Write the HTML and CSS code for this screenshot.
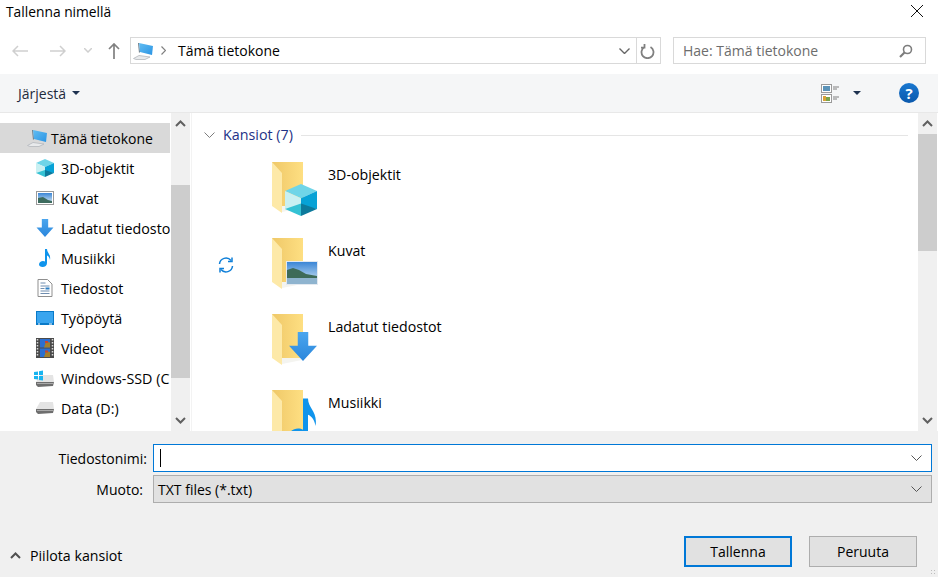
FILE: index.html
```html
<!DOCTYPE html>
<html lang="fi">
<head>
    <meta charset="utf-8">
    <title>Tallenna nimellä</title>
    <link rel="stylesheet" href="styles.css">
</head>
<body>
    <svg class="sprites" width="0" height="0">
        <defs>
            <linearGradient id="folder-back" x1="0" y1="0" x2="1" y2="0">
                <stop offset="0" stop-color="#efc868"/>
                <stop offset="1" stop-color="#fedf82"/>
            </linearGradient>
            <linearGradient id="sky" x1="0" y1="0" x2="0" y2="1">
                <stop offset="0" stop-color="#3b86d6"/>
                <stop offset="1" stop-color="#dcecf5"/>
            </linearGradient>
            <linearGradient id="arrow-blue" x1="0" y1="0" x2="0" y2="1">
                <stop offset="0" stop-color="#4ba6ee"/>
                <stop offset="1" stop-color="#2a86dc"/>
            </linearGradient>
            <linearGradient id="screen" x1="0" y1="0" x2="1" y2="1">
                <stop offset="0" stop-color="#62bdf2"/>
                <stop offset="1" stop-color="#2a94e4"/>
            </linearGradient>
            <symbol id="computer" viewBox="0 0 21 18">
                <polygon points="0.500,16.500 6,13.500 17,15 12,17.500 3,17.500" fill="#e8eaec" stroke="#b4b8bc" stroke-width="0.800"/>
                <polygon points="5,1 6,1 7,10 6,11" fill="#6f7e8a"/>
                <polygon points="6,1 20,4 19,13 7,10" fill="url(#screen)"/>
            </symbol>
            <symbol id="picture" viewBox="0 0 18 14">
                <rect x="0.5" y="0.5" width="17" height="13" fill="#fff" stroke="#9a9a9a"/>
                <rect x="2" y="2" width="14" height="10" fill="url(#sky)"/>
                <polygon points="2,7 7,6 12,9 16,10 16,12 2,12" fill="#3d6b5e"/>
            </symbol>
            <symbol id="photo" viewBox="0 0 32 24">
                <rect width="32" height="24" fill="#e3e9f0"/>
                <rect x="1" y="1" width="30" height="22" fill="url(#sky)"/>
                <polygon points="1,9 7,7 13,9 20,13 31,15 31,17 1,17" fill="#3e6b58"/>
                <rect x="1" y="17" width="30" height="6" fill="#8fb4cf"/>
            </symbol>
            <symbol id="arrow-down" viewBox="0 0 16 17">
                <polygon points="5,0 11,0 11,8 16,8 8,17 0,8 5,8" fill="url(#arrow-blue)"/>
            </symbol>
            <symbol id="note" viewBox="0 0 12 18">
                <path d="M6 0h2c0 4 4 5 3 11-.4-2.500-1.600-4-3-4.500V14c0 2.500-2 4-4.500 4C1.500 18 0 17 0 15.500 0 13.500 2 12 4 12c.8 0 1.500.2 2 .5z" fill="#0f94ec"/>
            </symbol>
            <symbol id="document" viewBox="0 0 15 18">
                <polygon points="0.500,0.500 10,0.500 14.500,5 14.500,17.500 0.500,17.500" fill="#fff" stroke="#8f8f8f"/>
                <path d="M3 4h5M3 7h9M3 9.500h4M3 12h9M3 14.500h9" stroke="#6f8db0" stroke-width="1"/>
                <rect x="8" y="8.500" width="4" height="2" fill="#2d7fc4"/>
            </symbol>
            <symbol id="desktop" viewBox="0 0 18 14">
                <rect width="18" height="14" fill="#0a7ac8"/>
                <rect x="1" y="1" width="16" height="11" fill="#39a5ef"/>
                <rect x="2" y="12.500" width="2" height="1" fill="#fff"/>
                <rect x="13" y="12.500" width="3" height="1" fill="#fff"/>
            </symbol>
            <symbol id="film" viewBox="0 0 18 20">
                <rect width="18" height="20" fill="#4a4a4a"/>
                <path d="M1.500 1v18M16.500 1v18" stroke="#d8d8d8" stroke-width="1.500" stroke-dasharray="1.500 1.500"/>
                <rect x="4" y="1" width="10" height="8.500" fill="#2b6fd0"/>
                <rect x="4" y="10.500" width="10" height="8.500" fill="#2b6fd0"/>
                <path d="M8 9.500l2-6 4 1v5zM8 19l2-6 4 1v5z" fill="#a3802c"/>
                <rect x="9" y="3" width="3" height="2" fill="#c9432e"/>
                <rect x="9" y="12.500" width="3" height="2" fill="#c9432e"/>
            </symbol>
            <symbol id="drive" viewBox="0 0 18 12">
                <polygon points="4,0 17,0 18,7 0,7" fill="#e4e4e4"/>
                <polygon points="0,7 18,7 17,11 2,12 0,10" fill="#6e6e6e"/>
                <rect x="1" y="8" width="16" height="1" fill="#aaa"/>
            </symbol>
            <symbol id="drive-win" viewBox="0 0 20 17">
                <use href="#drive" x="2" y="5" width="18" height="12"/>
                <path d="M0 2l4-.6V5H0zM5 1.200L9 .5V5H5zM0 6h4v3.500L0 9zM5 6h4v4.500L5 10z" fill="#18b4f0"/>
            </symbol>
            <symbol id="cube" viewBox="0 0 18 18">
                <polygon points="9,0 18,4 9,8 0,4" fill="#6fd5e8"/>
                <polygon points="0,4 9,8 9,13 0,14" fill="#c9f0f2"/>
                <polygon points="18,4 9,8 9,13 18,14" fill="#07a2d6"/>
                <polygon points="0,14 9,11 9,18" fill="#35c2d4"/>
                <polygon points="18,14 9,11 9,18" fill="#0d7a9c"/>
            </symbol>
            <symbol id="folder" viewBox="0 0 46 54">
                <polygon points="0,0 31,0 31,44 10,44 10,50 0,43" fill="url(#folder-back)"/>
                <polygon points="0,0 10,11 10,51 0,44" fill="#fde9a8"/>
                <polygon points="10,44 30,44 30,46 10,50" fill="#f4f4f0"/>
            </symbol>
        </defs>
    </svg>

    <div class="dialog">
        <div class="titlebar">
            <span class="title">Tallenna nimellä</span>
            <svg class="close-icon" width="12" height="12" viewBox="0 0 12 12"><path d="M0 0l12 12M12 0L0 12" stroke="#111" fill="none"/></svg>
        </div>

        <div class="navbar">
            <svg class="nav-back" width="16" height="12" viewBox="0 0 16 12"><path d="M16 6H1M6 1L1 6l5 5" stroke="#cfcfcf" stroke-width="1.500" fill="none"/></svg>
            <svg class="nav-forward" width="16" height="12" viewBox="0 0 16 12"><path d="M0 6h15M10 1l5 5-5 5" stroke="#cfcfcf" stroke-width="1.500" fill="none"/></svg>
            <svg class="nav-recent" width="8" height="5" viewBox="0 0 8 5"><path d="M0 0l4 4 4-4" stroke="#cfcfcf" stroke-width="1.500" fill="none"/></svg>
            <svg class="nav-up" width="12" height="16" viewBox="0 0 12 16"><path d="M6 16V1M1 6l5-5 5 5" stroke="#808080" stroke-width="1.700" fill="none"/></svg>
            <div class="address">
                <svg class="address-icon" width="21" height="18"><use href="#computer"/></svg>
                <svg class="address-sep" width="5" height="9" viewBox="0 0 5 9"><path d="M.5.500l4 4-4 4" stroke="#808080" stroke-width="1.200" fill="none"/></svg>
                <span class="address-text">Tämä tietokone</span>
                <svg class="address-drop" width="11" height="6" viewBox="0 0 11 6"><path d="M.5.500l5 5 5-5" stroke="#666" stroke-width="1.400" fill="none"/></svg>
                <div class="address-refresh">
                    <svg width="15" height="16" viewBox="0 0 15 16"><path d="M4.500 4a6 6 0 1 0 6 0M4.500 1v3.700H1" stroke="#808080" stroke-width="1.800" fill="none"/></svg>
                </div>
            </div>
            <div class="search">
                <span class="search-text">Hae: Tämä tietokone</span>
                <svg width="14" height="14" viewBox="0 0 14 14"><circle cx="8.500" cy="5.500" r="4" stroke="#7d7d7d" stroke-width="1.600" fill="none"/><path d="M5.500 8.500L1 13" stroke="#7d7d7d" stroke-width="2.200"/></svg>
            </div>
        </div>

        <div class="toolbar">
            <span class="organize">Järjestä</span>
            <span class="caret"></span>
            <svg class="view-icon" width="19" height="19" viewBox="0 0 19 19">
                <rect x=".5" y=".5" width="10" height="8" fill="#fff" stroke="#9a9a9a"/>
                <rect x="2" y="2" width="7" height="5" fill="#5b93b8"/>
                <rect x=".5" y="10.500" width="10" height="8" fill="#fff" stroke="#9a9a9a"/>
                <rect x="2" y="12" width="3" height="5" fill="#d8a23a"/>
                <rect x="5" y="13" width="4" height="4" fill="#7ba34a"/>
                <path d="M12 3h6M12 5h4M12 13h6M12 15h4" stroke="#808080"/>
            </svg>
            <span class="caret view-caret"></span>
            <span class="help">?</span>
        </div>

        <div class="browser">
            <div class="sidebar">
                <ul class="tree">
                    <li class="tree-root"><svg width="21" height="18"><use href="#computer"/></svg><span>Tämä tietokone</span></li>
                    <li><svg width="18" height="18"><use href="#cube"/></svg><span>3D-objektit</span></li>
                    <li><svg width="18" height="14"><use href="#picture"/></svg><span>Kuvat</span></li>
                    <li><svg width="18" height="18"><use href="#arrow-down"/></svg><span>Ladatut tiedostot</span></li>
                    <li><svg width="18" height="18"><use href="#note"/></svg><span>Musiikki</span></li>
                    <li><svg width="18" height="18"><use href="#document"/></svg><span>Tiedostot</span></li>
                    <li><svg width="18" height="14"><use href="#desktop"/></svg><span>Työpöytä</span></li>
                    <li><svg width="18" height="20"><use href="#film"/></svg><span>Videot</span></li>
                    <li><svg width="20" height="17" class="icon-wide"><use href="#drive-win"/></svg><span>Windows-SSD (C:)</span></li>
                    <li><svg width="18" height="12"><use href="#drive"/></svg><span>Data (D:)</span></li>
                </ul>
                <div class="scrollbar scrollbar-side">
                    <svg class="scroll-arrow" width="11" height="7" viewBox="0 0 11 7"><path d="M1 6l4.500-4.500L10 6" stroke="#606060" stroke-width="2" fill="none"/></svg>
                    <div class="thumb"></div>
                    <svg class="scroll-arrow arrow-end" width="11" height="7" viewBox="0 0 11 7"><path d="M1 1l4.500 4.500L10 1" stroke="#606060" stroke-width="2" fill="none"/></svg>
                </div>
            </div>

            <div class="files">
                <div class="group-head">
                    <svg width="11" height="6" viewBox="0 0 11 6"><path d="M.5.500l5 5 5-5" stroke="#7d7d7d" fill="none"/></svg>
                    <span class="group-name">Kansiot (7)</span>
                    <span class="group-line"></span>
                </div>

                <div class="folder-item">
                    <span class="status"></span>
                    <div class="folder-icon">
                        <svg class="folder-base" width="46" height="54"><use href="#folder"/></svg>
                        <svg class="overlay overlay-cube" width="32" height="32"><use href="#cube"/></svg>
                    </div>
                    <span class="folder-name">3D-objektit</span>
                </div>
                <div class="folder-item">
                    <span class="status">
                        <svg width="16" height="16" viewBox="0 0 16 16"><path d="M1.500 7A6.500 6.500 0 0 1 13 3.500M14.500 9A6.500 6.500 0 0 1 3 12.500" stroke="#0f7fd8" stroke-width="1.500" fill="none"/><path d="M14 .500v4h-4M2 15.500v-4h4" stroke="#0f7fd8" stroke-width="1.500" fill="none"/></svg>
                    </span>
                    <div class="folder-icon">
                        <svg class="folder-base" width="46" height="54"><use href="#folder"/></svg>
                        <svg class="overlay overlay-picture" width="32" height="24"><use href="#photo"/></svg>
                    </div>
                    <span class="folder-name">Kuvat</span>
                </div>
                <div class="folder-item">
                    <span class="status"></span>
                    <div class="folder-icon">
                        <svg class="folder-base" width="46" height="54"><use href="#folder"/></svg>
                        <svg class="overlay overlay-arrow" width="28" height="29" viewBox="0 0 16 17" preserveAspectRatio="none"><use href="#arrow-down"/></svg>
                    </div>
                    <span class="folder-name">Ladatut tiedostot</span>
                </div>
                <div class="folder-item">
                    <span class="status"></span>
                    <div class="folder-icon">
                        <svg class="folder-base" width="46" height="54"><use href="#folder"/></svg>
                        <svg class="overlay overlay-note" width="30" height="46"><use href="#note"/></svg>
                    </div>
                    <span class="folder-name">Musiikki</span>
                </div>

                <div class="scrollbar scrollbar-main">
                    <svg class="scroll-arrow" width="11" height="7" viewBox="0 0 11 7"><path d="M1 6l4.500-4.500L10 6" stroke="#606060" stroke-width="2" fill="none"/></svg>
                    <div class="thumb"></div>
                    <svg class="scroll-arrow arrow-end" width="11" height="7" viewBox="0 0 11 7"><path d="M1 1l4.500 4.500L10 1" stroke="#606060" stroke-width="2" fill="none"/></svg>
                </div>
            </div>
        </div>

        <div class="footer">
            <div class="field">
                <label class="field-label">Tiedostonimi:</label>
                <div class="field-box box-input">
                    <span class="text-cursor"></span>
                    <svg class="field-drop" width="11" height="6" viewBox="0 0 11 6"><path d="M.5.500l5 5 5-5" stroke="#555" fill="none"/></svg>
                </div>
            </div>
            <div class="field field-type">
                <label class="field-label label-type">Muoto:</label>
                <div class="field-box box-select">
                    <span>TXT files (*.txt)</span>
                    <svg class="field-drop" width="11" height="6" viewBox="0 0 11 6"><path d="M.5.500l5 5 5-5" stroke="#555" fill="none"/></svg>
                </div>
            </div>
            <div class="actions">
                <div class="hide-folders">
                    <svg width="11" height="7" viewBox="0 0 11 7"><path d="M1 6l4.500-4.500L10 6" stroke="#505050" stroke-width="2" fill="none"/></svg>
                    <span>Piilota kansiot</span>
                </div>
                <button class="btn btn-primary">Tallenna</button>
                <button class="btn">Peruuta</button>
            </div>
            <span class="grip"></span>
        </div>
    </div>
</body>
</html>
```

FILE: styles.css
```css
* {
    box-sizing: border-box;
}

html,
body {
    margin: 0;
    height: 100%;
}

body {
    font-family: "Open Sans", "Noto Sans", Arial, sans-serif;
    font-size: 14px;
    color: #000;
    background-color: #f0f0f0;
    overflow: hidden;
}

.sprites {
    position: absolute;
}

.dialog {
    display: flex;
    flex-direction: column;
    width: 938px;
    height: 577px;
}

/* Title bar */
.titlebar {
    display: flex;
    align-items: center;
    justify-content: space-between;
    height: 24px;
    padding: 0 15px 2px 6px;
    background-color: #fff;
    font-size: 13.8px;
}

/* Address row */
.navbar {
    display: flex;
    align-items: center;
    height: 50px;
    padding: 13px 12px 10px 12px;
    background-color: #fff;
}

.nav-forward {
    margin-left: 22px;
}

.nav-recent {
    margin-left: 18px;
}

.nav-up {
    margin-left: 16px;
}

.address {
    display: flex;
    align-items: center;
    width: 531px;
    height: 27px;
    margin-left: 10px;
    padding-left: 2px;
    border: 1px solid #d9d9d9;
}

.address-sep {
    margin-left: 7px;
}

.address-text {
    margin-left: 12px;
}

.address-drop {
    margin-left: auto;
    margin-right: 6px;
}

.address-refresh {
    display: flex;
    align-items: center;
    justify-content: center;
    width: 24px;
    height: 100%;
    padding-right: 2px;
    border-left: 1px solid #d9d9d9;
}

.search {
    display: flex;
    align-items: center;
    justify-content: space-between;
    width: 253px;
    height: 27px;
    margin-left: 12px;
    padding: 0 12px 0 9px;
    border: 1px solid #d9d9d9;
    color: #6d6d6d;
}

/* Toolbar */
.toolbar {
    display: flex;
    align-items: center;
    height: 39px;
    padding: 0 19px 0 18px;
    background-color: #f5f6f7;
    border-bottom: 1px solid #e8e8e8;
    color: #1e2a3c;
}

.caret {
    width: 0;
    height: 0;
    margin-left: 6px;
    border-left: 4px solid transparent;
    border-right: 4px solid transparent;
    border-top: 4px solid #1e3250;
}

.view-icon {
    margin-left: auto;
}

.view-caret {
    margin-left: 13px;
}

.help {
    width: 20px;
    height: 20px;
    margin-left: 38px;
    border-radius: 50%;
    background-image: linear-gradient(#1a78d0, #0a58ac);
    color: #fff;
    font-size: 15px;
    font-weight: 700;
    line-height: 20px;
    text-align: center;
}

/* Folder tree and file list */
.browser {
    display: flex;
    height: 318px;
    background-color: #fff;
}

.sidebar {
    display: flex;
    flex: none;
    width: 192px;
    border-right: 1px solid #f3f3f3;
}

.tree {
    flex: none;
    width: 170px;
    margin: 0 1px 0 0;
    padding: 10px 0 0 0;
    list-style: none;
    font-size: 14.3px;
    overflow: hidden;
}

.tree li {
    display: flex;
    align-items: center;
    height: 30px;
    padding-left: 36px;
    white-space: nowrap;
}

.tree li svg {
    flex: none;
    margin-right: 7px;
}

.tree li .icon-wide {
    margin-left: -2px;
}

.tree .tree-root {
    padding-left: 27px;
    background-color: #d9d9d9;
    font-size: 14px;
}

.tree .tree-root svg {
    margin-right: 3px;
}

.scrollbar {
    display: flex;
    flex: none;
    flex-direction: column;
    align-items: center;
    width: 19px;
    background-color: #f0f0f0;
}

.scroll-arrow {
    flex: none;
    margin-top: 7px;
    margin-bottom: 7px;
}

.thumb {
    flex: none;
    width: 100%;
    background-color: #cdcdcd;
}

.scrollbar-side .thumb {
    height: 193px;
    margin-top: 51px;
}

.scrollbar-main .thumb {
    height: 117px;
}

.arrow-end {
    margin-top: auto;
}

.files {
    position: relative;
    flex: 1;
    overflow: hidden;
}

.scrollbar-main {
    position: absolute;
    top: 0;
    right: 1px;
    bottom: 0;
}

.group-head {
    display: flex;
    align-items: center;
    height: 44px;
    padding: 0 30px 0 12px;
}

.group-head svg {
    margin-right: 8px;
}

.group-name {
    padding-bottom: 1px;
    color: #1e3287;
    font-size: 14.3px;
}

.group-line {
    flex: 1;
    height: 1px;
    margin-left: 8px;
    background-color: #e5e5e5;
}

.folder-item {
    display: flex;
    align-items: flex-start;
    height: 76px;
    padding: 5px 0 0 26px;
}

.status {
    display: flex;
    flex: none;
    align-items: center;
    width: 16px;
    height: 54px;
}

.folder-icon {
    position: relative;
    flex: none;
    width: 46px;
    height: 54px;
    margin-left: 38px;
}

.folder-base {
    display: block;
}

.overlay {
    position: absolute;
}

.overlay-cube {
    left: 13px;
    top: 22px;
}

.overlay-picture {
    left: 14px;
    top: 23px;
}

.overlay-arrow {
    left: 17px;
    top: 18px;
}

.overlay-note {
    left: 16px;
    top: 8px;
}

.folder-name {
    margin-top: 3px;
    margin-left: 10px;
    font-size: 14.2px;
}

/* Bottom form */
.footer {
    position: relative;
    flex: 1;
    padding: 13px 6px 0 0;
}

.field {
    display: flex;
    align-items: center;
    height: 28px;
}

.field-type {
    margin-top: 3px;
}

.field-label {
    width: 147px;
    text-align: right;
}

.label-type {
    padding-right: 4px;
}

.field-box {
    display: flex;
    align-items: center;
    justify-content: space-between;
    width: 779px;
    height: 28px;
    margin-left: 6px;
    padding: 0 9px 0 4px;
}

.box-input {
    background-color: #fff;
    border: 1px solid #0078d7;
}

.box-select {
    background-color: #e1e1e1;
    border: 1px solid #adadad;
}

.text-cursor {
    width: 1px;
    height: 18px;
    margin-left: 2px;
    background-color: #000;
}

.actions {
    display: flex;
    align-items: center;
    margin-top: 33px;
    padding-right: 1px;
}

.hide-folders {
    display: flex;
    align-items: center;
    margin-right: auto;
    padding-top: 8px;
    padding-left: 10px;
    font-size: 14.2px;
}

.hide-folders svg {
    margin-right: 9px;
}

.btn {
    width: 108px;
    height: 31px;
    margin-left: 17px;
    margin-right: 14px;
    padding: 0;
    background-color: #e1e1e1;
    border: 1px solid #adadad;
    color: #000;
    font: inherit;
}

.btn-primary {
    margin-right: 0;
    border: 2px solid #0078d7;
}

.grip {
    position: absolute;
    right: 1px;
    bottom: 1px;
    width: 7px;
    height: 7px;
    background-image: radial-gradient(#bdbdbd 1px, transparent 1px);
    background-size: 3px 3px;
}
```
